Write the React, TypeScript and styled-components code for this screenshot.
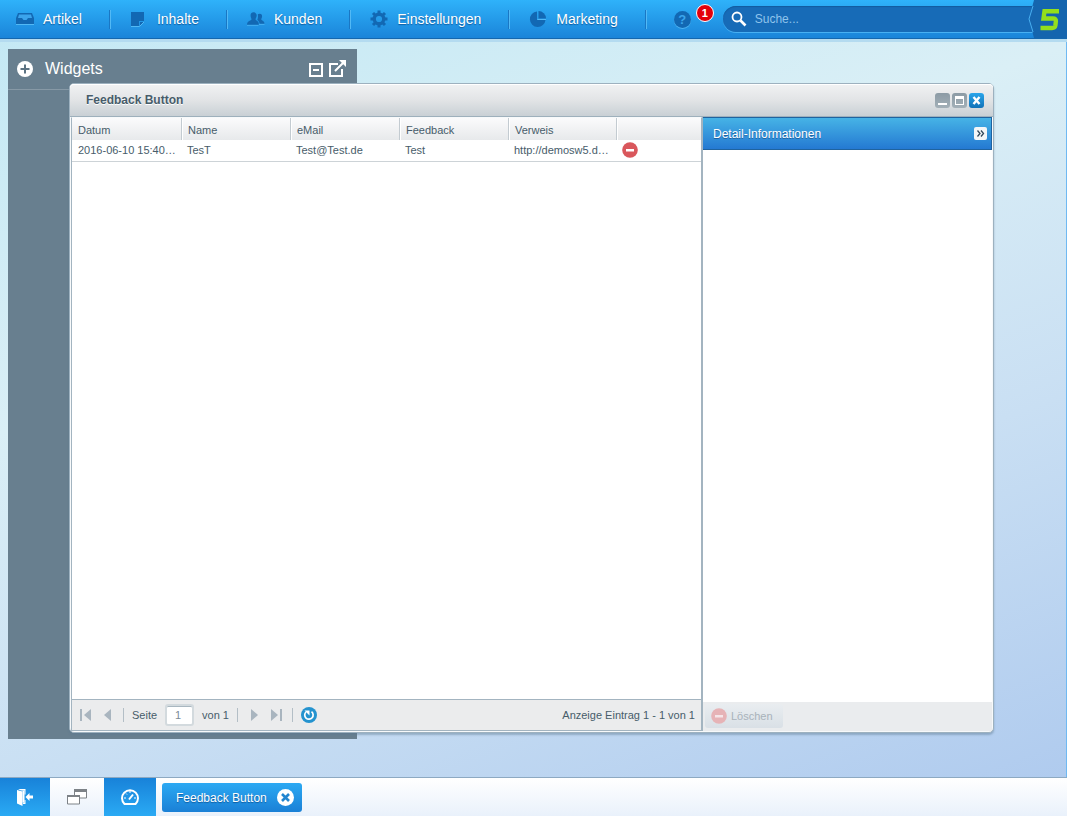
import React from "react";
import styled, { createGlobalStyle, css } from "styled-components";

const GlobalStyle = createGlobalStyle`
  *, *::before, *::after { box-sizing: border-box; }
  body {
    margin: 0;
    font-family: "Liberation Sans", Arial, sans-serif;
    font-size: 11px;
    color: #475c6a;
  }
  button, input { font-family: inherit; }
  button { margin: 0; padding: 0; border: 0; background: none; color: inherit; }
  svg { display: block; flex: none; }
`;

const Page = styled.div`
  display: flex;
  flex-direction: column;
  min-height: 100vh;
  background: linear-gradient(160deg, #c2e8f4 0%, #daeff6 36%, #c9dff3 65%, #adc9ee 100%);
`;

/* Top bar */

const TopBar = styled.header`
  display: flex;
  align-items: center;
  height: 39px;
  background: linear-gradient(#2fb2fa, #1a84d9);
  border-bottom: 1px solid #1567ae;
  box-shadow: 0 3px 0 #b4dbf0;
  position: relative;
  z-index: 1;
`;

const Menu = styled.nav`
  display: flex;
  align-items: center;
`;

const MenuItem = styled.a`
  display: flex;
  align-items: center;
  gap: 9px;
  height: 19px;
  padding: 0 27px 0 19px;
  border-right: 1px solid #1a77c4;
  box-shadow: 1px 0 0 #52b9f5;
  margin-right: 1px;
  font-size: 14px;
  line-height: 19px;
  color: #fff;
  text-decoration: none;
  text-shadow: 0 1px 1px #0f5c9f;
  &:first-child { padding-left: 16px; }
`;

const Help = styled.button`
  position: relative;
  width: 17px;
  height: 17px;
  margin: 0 32px 0 27px;
  border-radius: 50%;
  background: #1268b3;
  box-shadow: 0 1px 0 #4db3f2;
  color: #3ba4ec;
  font-size: 13px;
  font-weight: bold;
  line-height: 17px;
  text-align: center;
`;

const Badge = styled.span`
  position: absolute;
  top: -7px;
  left: 22px;
  width: 18px;
  height: 18px;
  border: 1px solid #fff;
  border-radius: 50%;
  background: #e3000b;
  color: #fff;
  font-size: 11px;
  line-height: 16px;
`;

const Search = styled.label`
  display: flex;
  align-items: center;
  flex: 1;
  gap: 8px;
  height: 26px;
  padding-left: 8px;
  border-radius: 13px 0 0 13px;
  background: #176bb7;
  box-shadow: 0 1px 0 #48b0f2, inset 0 1px 1px #125b9f;
`;

const SearchInput = styled.input`
  flex: 1;
  min-width: 0;
  padding: 0;
  border: 0;
  outline: 0;
  background: none;
  color: #fff;
  font-size: 12px;
  &::placeholder { color: #8fc4ec; opacity: 1; }
`;

const Logo = styled.a`
  position: relative;
  height: 38px;
  margin-left: -6px;
`;

/* Desktop */

const Desktop = styled.main`
  position: relative;
  flex: 1;
  border-right: 1px solid #6fb9f2;
`;

const Widgets = styled.aside`
  position: absolute;
  top: 10px;
  bottom: 38px;
  left: 8px;
  width: 349px;
  background: #687f8f;
`;

const WidgetsHead = styled.div`
  display: flex;
  align-items: center;
  height: 41px;
  padding: 0 10px 0 9px;
  border-bottom: 1px solid #8799a6;
`;

const WidgetsTitle = styled.h2`
  flex: 1;
  margin: 0 0 0 12px;
  font-size: 16px;
  font-weight: normal;
  color: #fff;
`;

const WidgetTools = styled.div`
  display: flex;
  align-items: center;
  gap: 6px;
`;

const Window = styled.section`
  position: absolute;
  top: 44px;
  right: 72px;
  bottom: 44px;
  left: 69px;
  display: flex;
  flex-direction: column;
  padding: 0 1px 1px;
  border: 1px solid #9db1bf;
  border-radius: 5px;
  background: #f7f9fa;
  box-shadow: 0 2px 2px rgba(90, 120, 145, 0.45);
`;

const TitleBar = styled.div`
  display: flex;
  align-items: center;
  height: 33px;
  margin: 0 -1px;
  padding: 0 9px 0 16px;
  border-bottom: 1px solid #9eb0bc;
  border-radius: 4px 4px 0 0;
  background: linear-gradient(#f1f2f3, #e2e4e6 50%, #c9d0d5);
  box-shadow: inset 0 1px 0 #fff;
`;

const WindowTitle = styled.h1`
  flex: 1;
  margin: 0;
  font-size: 12px;
  color: #475c6a;
  text-shadow: 0 1px 0 #fff;
`;

const WindowTools = styled.div`
  display: flex;
  gap: 2px;
`;

const ToolButton = styled.button<{ $primary?: boolean }>`
  width: 15px;
  height: 15px;
  border-radius: 3px;
  background: ${(p) => (p.$primary ? "linear-gradient(#2aa5ea, #1172b8)" : "linear-gradient(#8c9ba5, #a3b0b8)")};
`;

const Body = styled.div`
  display: flex;
  flex: 1;
  min-height: 0;
`;

const GridPanel = styled.div`
  display: flex;
  flex: 1;
  flex-direction: column;
  min-width: 0;
  background: #fff;
  border: 1px solid #a3b4c0;
  border-top-color: #f7f9fa;
`;

const GridArea = styled.div`
  flex: 1;
`;

const Table = styled.table`
  width: 100%;
  table-layout: fixed;
  border-collapse: separate;
  border-spacing: 0;
`;

const Th = styled.th`
  height: 22px;
  padding: 1px 6px 0;
  border-right: 1px solid #c3cbd1;
  background: linear-gradient(#fbfbfc, #e7e9eb);
  font-weight: normal;
  text-align: left;
  &:nth-child(n + 2) { box-shadow: inset 1px 0 0 #fff; }
  &:last-child { border-right: 0; }
`;

const Td = styled.td`
  height: 22px;
  padding: 0 5px 1px;
  border-bottom: 1px solid #cdd3d7;
  overflow: hidden;
  text-overflow: ellipsis;
  white-space: nowrap;
  &:first-child { padding-left: 6px; }
`;

const RowAction = styled.button`
  display: block;
`;

const Col = styled.col<{ $w?: number }>`
  ${(p) => p.$w && css`width: ${p.$w}px;`}
`;

const Pager = styled.div`
  display: flex;
  align-items: center;
  gap: 8px;
  height: 31px;
  padding: 0 6px 0 5px;
  border-top: 1px solid #a3b4c0;
  background: #ebeced;
`;

const PagerLabel = styled.label`
  display: flex;
  align-items: center;
  gap: 8px;
`;

const PageInput = styled.input`
  width: 29px;
  height: 22px;
  padding: 0 8px;
  border: 2px solid #d3dade;
  border-radius: 3px;
  background: #fff;
  box-shadow: inset 0 1px 0 #a9b7c0;
  color: #7b8b96;
  font-size: 11px;
`;

const Divider = styled.span`
  width: 1px;
  height: 14px;
  background: #b3bec6;
`;

const PagerButton = styled.button`
  display: flex;
  justify-content: center;
  width: 15px;
`;

const Status = styled.span`
  margin-left: auto;
`;

const Detail = styled.div`
  display: flex;
  flex-direction: column;
  width: 290px;
  background: #fff;
  border-left: 1px solid #a3b4c0;
`;

const DetailHead = styled.div`
  display: flex;
  align-items: center;
  justify-content: space-between;
  height: 33px;
  padding: 0 4px 0 10px;
  background: linear-gradient(#46b3e6, #2479d2);
  border: solid #1f639f;
  border-width: 1px 1px 1px 0;
`;

const DetailTitle = styled.h2`
  margin: 0;
  font-size: 12px;
  font-weight: normal;
  color: #fff;
  text-shadow: 0 1px 0 #1f639f;
`;

const Collapse = styled.button`
  display: flex;
  align-items: center;
  justify-content: center;
  width: 13px;
  height: 13px;
  border-radius: 2px;
  background: #f4f6f8;
`;

const DetailBody = styled.div`
  flex: 1;
`;

const DetailFoot = styled.div`
  height: 29px;
  padding: 2px;
  background: #eaecee;
`;

const DeleteButton = styled.button`
  display: flex;
  align-items: center;
  gap: 4px;
  height: 24px;
  padding: 0 10px 0 6px;
  border-radius: 3px;
  background: linear-gradient(#e9edf0, #d9e0e6);
  color: #a8b2ba;
  font-size: 11px;
`;

/* Taskbar */

const Taskbar = styled.footer`
  display: flex;
  height: 39px;
  border-top: 1px solid #8da9c2;
  background: linear-gradient(#fff, #e9f1fb);
`;

const DockButton = styled.button<{ $active?: boolean; $w: number }>`
  display: flex;
  align-items: center;
  justify-content: center;
  width: ${(p) => p.$w}px;
  ${(p) => p.$active && css`background: linear-gradient(#1882d9, #2aaaf4);`}
`;

const Task = styled.button`
  display: flex;
  align-items: center;
  justify-content: space-between;
  width: 140px;
  height: 29px;
  margin: 5px 6px;
  padding: 0 8px 0 14px;
  border-radius: 3px;
  background: linear-gradient(#2ba9f3, #1a80d6);
  color: #fff;
  font-size: 12px;
  text-shadow: 0 1px 1px #0f5c9f;
`;

const NAVY = "#1268b3";

const Tray = () => (
  <svg width="18" height="18" viewBox="0 0 18 18">
    <path d="M2 4h14l2 5v6H0V9z" fill="#52b9f5" />
    <path d="M2 3h14l2 5v6H0V8z" fill={NAVY} />
    <path d="M3 4.500h12l1 3.500h-4l-1.500 2h-3L6 8H2z" fill="#3ba4ec" />
  </svg>
);
const Sheet = () => (
  <svg width="18" height="18" viewBox="0 0 18 18">
    <path d="M1 2h13v9h-5v5H1z" fill={NAVY} />
    <path d="M10 12h4l-4 4z" fill={NAVY} />
    <path d="M1 16.500h8.500L14 12" fill="none" stroke="#52b9f5" />
  </svg>
);
const People = () => (
  <svg width="18" height="18" viewBox="0 0 19 18">
    <path d="M0 15.500h12M12 14.500h6.500" stroke="#52b9f5" />
    <path d="M7 2c2.200 0 3.400 1.500 3.200 3.600C10 7.500 9.200 8.400 9 9.300c.2 1.500 3.500 1.500 3.600 5.700H0c.2-4.200 4.600-4 4.800-5.700C4.600 8.400 3.900 7.500 3.800 5.600 3.600 3.500 4.800 2 7 2z" fill={NAVY} />
    <path d="M13.500 3.500c1.700 0 2.500 1.200 2.400 2.800-.1 1.500-.8 2.300-.9 3 .2 1.500 3.200 1.200 3.500 4.700h-5.200c-.3-2.300-1.500-3.400-2.400-4.200.2-1 .7-1.700.7-3.500 0-.9 0-1.700-.2-2.200.5-.4 1.200-.6 2.100-.6z" fill={NAVY} />
  </svg>
);
const Gear = () => (
  <svg width="18" height="18" viewBox="0 0 18 18">
    <g stroke={NAVY} strokeWidth="3">
      <path d="M9 .5v4M9 13.500v4M.5 9h4M13.500 9h4M3 3l3 3M12 12l3 3M3 15l3-3M12 6l3-3" />
    </g>
    <circle cx="9" cy="9" r="4.800" fill="none" stroke={NAVY} strokeWidth="3.400" />
  </svg>
);
const Pie = () => (
  <svg width="18" height="18" viewBox="0 0 18 18">
    <path d="M8 1.500A7.800 7.800 0 1 0 16.500 10H8z" fill={NAVY} />
    <path d="M9.500 1a7.500 7.500 0 0 1 7.500 7.500H9.500z" fill={NAVY} />
    <path d="M8.500 9.500H17" stroke="#52b9f5" />
  </svg>
);

const MENU: [string, React.FC][] = [
  ["Artikel", Tray],
  ["Inhalte", Sheet],
  ["Kunden", People],
  ["Einstellungen", Gear],
  ["Marketing", Pie],
];

const Minus = ({ faded }: { faded?: boolean }) => (
  <svg width="16" height="16" viewBox="0 0 16 16">
    <circle cx="8" cy="8" r="7.800" fill={faded ? "#e6b3b6" : "#d9575c"} />
    <rect x="4" y="7" width="8" height="2.500" fill={faded ? "#f5e6e8" : "#fff"} />
  </svg>
);

const Arrow = ({ back, bar }: { back?: boolean; bar?: boolean }) => (
  <svg width="12" height="12" viewBox="0 0 12 12" transform={back ? "scale(-1 1)" : undefined}>
    <path d={bar ? "M0 0l7 6-7 6z" : "M3 0l7 6-7 6z"} fill="#a9b5bf" />
    {bar && <rect x="9" width="2" height="12" fill="#a9b5bf" />}
  </svg>
);

const COLUMNS = ["Datum", "Name", "eMail", "Feedback", "Verweis", ""];
const WIDTHS = [110, 109, 109, 109, 108, undefined];

export default function App() {
  return (
    <Page>
      <GlobalStyle />
      <TopBar>
        <Menu>
          {MENU.map(([label, Icon]) => (
            <MenuItem href="#" key={label}>
              <Icon />
              {label}
            </MenuItem>
          ))}
        </Menu>
        <Help>
          ?<Badge>1</Badge>
        </Help>
        <Search>
          <svg width="16" height="16" viewBox="0 0 16 16" fill="none" stroke="#fff">
            <circle cx="6" cy="6" r="4.500" strokeWidth="1.800" />
            <path d="M9.500 9.500l5 5" strokeWidth="2.600" />
          </svg>
          <SearchInput type="text" aria-label="Suche" placeholder="Suche..." />
        </Search>
        <Logo href="#" aria-label="Start">
          <svg width="39" height="38" viewBox="0 0 39 38">
            <path d="M6 0H39V38H6L1 19z" fill="#1565ae" />
            <path d="M5 6L1 19l4 13" fill="none" stroke="#48b0f2" />
            <path d="M31 11.200H16.500L15.500 18.500H25q3.200 0 2.900 2.500l-.5 4.500q-.4 2.500-3.400 2.500H12.500" fill="none" stroke="#94e01c" strokeWidth="4.400" />
          </svg>
        </Logo>
      </TopBar>

      <Desktop>
        <Widgets>
          <WidgetsHead>
            <svg width="16" height="16" viewBox="0 0 16 16">
              <circle cx="8" cy="8" r="8" fill="#fff" />
              <path d="M8 3.500v9M3.500 8h9" stroke="#5c7383" strokeWidth="2" />
            </svg>
            <WidgetsTitle>Widgets</WidgetsTitle>
            <WidgetTools>
              <button aria-label="Minimieren">
                <svg width="14" height="18" viewBox="0 0 14 18" fill="none" stroke="#fff" strokeWidth="2">
                  <path d="M1 4h12v12H1zM4 10h6" />
                </svg>
              </button>
              <button aria-label="Ablösen">
                <svg width="18" height="18" viewBox="0 0 18 18" fill="none" stroke="#fff" strokeWidth="2">
                  <path d="M9 4H1v12h12V9M6 11l9-9" />
                  <path d="M10 0h7v7z" fill="#fff" stroke="none" />
                </svg>
              </button>
            </WidgetTools>
          </WidgetsHead>
        </Widgets>

        <Window>
          <TitleBar>
            <WindowTitle>Feedback Button</WindowTitle>
            <WindowTools>
              <ToolButton aria-label="Minimieren">
                <svg width="15" height="15"><rect x="3" y="10" width="9" height="2" fill="#fff" /></svg>
              </ToolButton>
              <ToolButton aria-label="Maximieren">
                <svg width="15" height="15"><path d="M3 3h9v9H3zM4 6v5h7V6z" fill="#fff" fillRule="evenodd" /></svg>
              </ToolButton>
              <ToolButton $primary aria-label="Schließen">
                <svg width="15" height="15"><path d="M4.500 4l6 7M10.500 4l-6 7" stroke="#fff" strokeWidth="2.400" /></svg>
              </ToolButton>
            </WindowTools>
          </TitleBar>
          <Body>
            <GridPanel>
              <GridArea>
                <Table>
                  <colgroup>
                    {WIDTHS.map((w, i) => <Col key={i} $w={w} />)}
                  </colgroup>
                  <thead>
                    <tr>{COLUMNS.map((c) => <Th key={c} scope="col">{c}</Th>)}</tr>
                  </thead>
                  <tbody>
                    <tr>
                      <Td>2016-06-10 15:40:00</Td>
                      <Td>TesT</Td>
                      <Td>Test@Test.de</Td>
                      <Td>Test</Td>
                      <Td>http://demosw5.demo</Td>
                      <Td>
                        <RowAction aria-label="Eintrag löschen"><Minus /></RowAction>
                      </Td>
                    </tr>
                  </tbody>
                </Table>
              </GridArea>
              <Pager>
                <PagerButton aria-label="Erste Seite"><Arrow back bar /></PagerButton>
                <PagerButton aria-label="Vorherige Seite"><Arrow back /></PagerButton>
                <Divider />
                <PagerLabel>
                  Seite
                  <PageInput type="text" defaultValue="1" />
                </PagerLabel>
                <span>von 1</span>
                <Divider />
                <PagerButton aria-label="Nächste Seite"><Arrow /></PagerButton>
                <PagerButton aria-label="Letzte Seite"><Arrow bar /></PagerButton>
                <Divider />
                <button aria-label="Aktualisieren">
                  <svg width="16" height="16" viewBox="0 0 16 16" fill="none" stroke="#fff">
                    <circle cx="8" cy="8" r="8" fill="#2493cf" stroke="none" />
                    <path d="M10.500 4.700A4.200 4.200 0 1 1 5 5" strokeWidth="1.700" />
                    <path d="M3.500 3.500h5v5z" fill="#fff" stroke="none" />
                  </svg>
                </button>
                <Status>Anzeige Eintrag 1 - 1 von 1</Status>
              </Pager>
            </GridPanel>
            <Detail>
              <DetailHead>
                <DetailTitle>Detail-Informationen</DetailTitle>
                <Collapse aria-label="Einklappen">
                  <svg width="9" height="9" viewBox="0 0 9 9" fill="none" stroke="#34495c" strokeWidth="1.300">
                    <path d="M1.500 1.500l2.500 3-2.500 3M5 1.500l2.500 3L5 7.500" />
                  </svg>
                </Collapse>
              </DetailHead>
              <DetailBody />
              <DetailFoot>
                <DeleteButton disabled><Minus faded />Löschen</DeleteButton>
              </DetailFoot>
            </Detail>
          </Body>
        </Window>
      </Desktop>

      <Taskbar>
        <DockButton $active $w={50} aria-label="Abmelden">
          <svg width="17" height="17" viewBox="0 0 17 17" fill="#fff">
            <path d="M0 1l5.500 1.500V17L0 14.500zM1 0h7.500v5.500H7.500V1.500H4zM6 15v-1.500h1.500V11h1v4z" />
            <path d="M5.500 1.500h2v12h-2z" />
            <path d="M8.500 8l4-4v2.500H16v3h-3.500V12z" />
          </svg>
        </DockButton>
        <DockButton $w={54} aria-label="Fenster">
          <svg width="20" height="16" viewBox="0 0 20 16">
            <path d="M7.500 1h12v8h-12z" fill="#fff" stroke="#7d8287" />
            <path d="M7 0h13v3H7z" fill="#7d8287" />
            <path d="M.5 7h12v8H.5z" fill="#fff" stroke="#7d8287" />
            <path d="M0 6h13v2H0z" fill="#7d8287" />
          </svg>
        </DockButton>
        <DockButton $active $w={52} aria-label="Widgets">
          <svg width="20" height="18" viewBox="0 0 20 18" fill="none" stroke="#fff" strokeWidth="2">
            <path d="M4.500 16A8 8 0 1 1 15.500 16z" strokeLinejoin="round" />
            <path d="M9 11.500l4-5" />
            <path d="M4 10h2M14 10h2M10 3v2M6 5.500l1 1" strokeWidth="1" />
          </svg>
        </DockButton>
        <Task>
          Feedback Button
          <svg width="17" height="17" viewBox="0 0 17 17">
            <circle cx="8.500" cy="8.500" r="8.500" fill="#fff" />
            <path d="M5 5l7 7M12 5l-7 7" stroke="#2285d0" strokeWidth="2.600" />
          </svg>
        </Task>
      </Taskbar>
    </Page>
  );
}
